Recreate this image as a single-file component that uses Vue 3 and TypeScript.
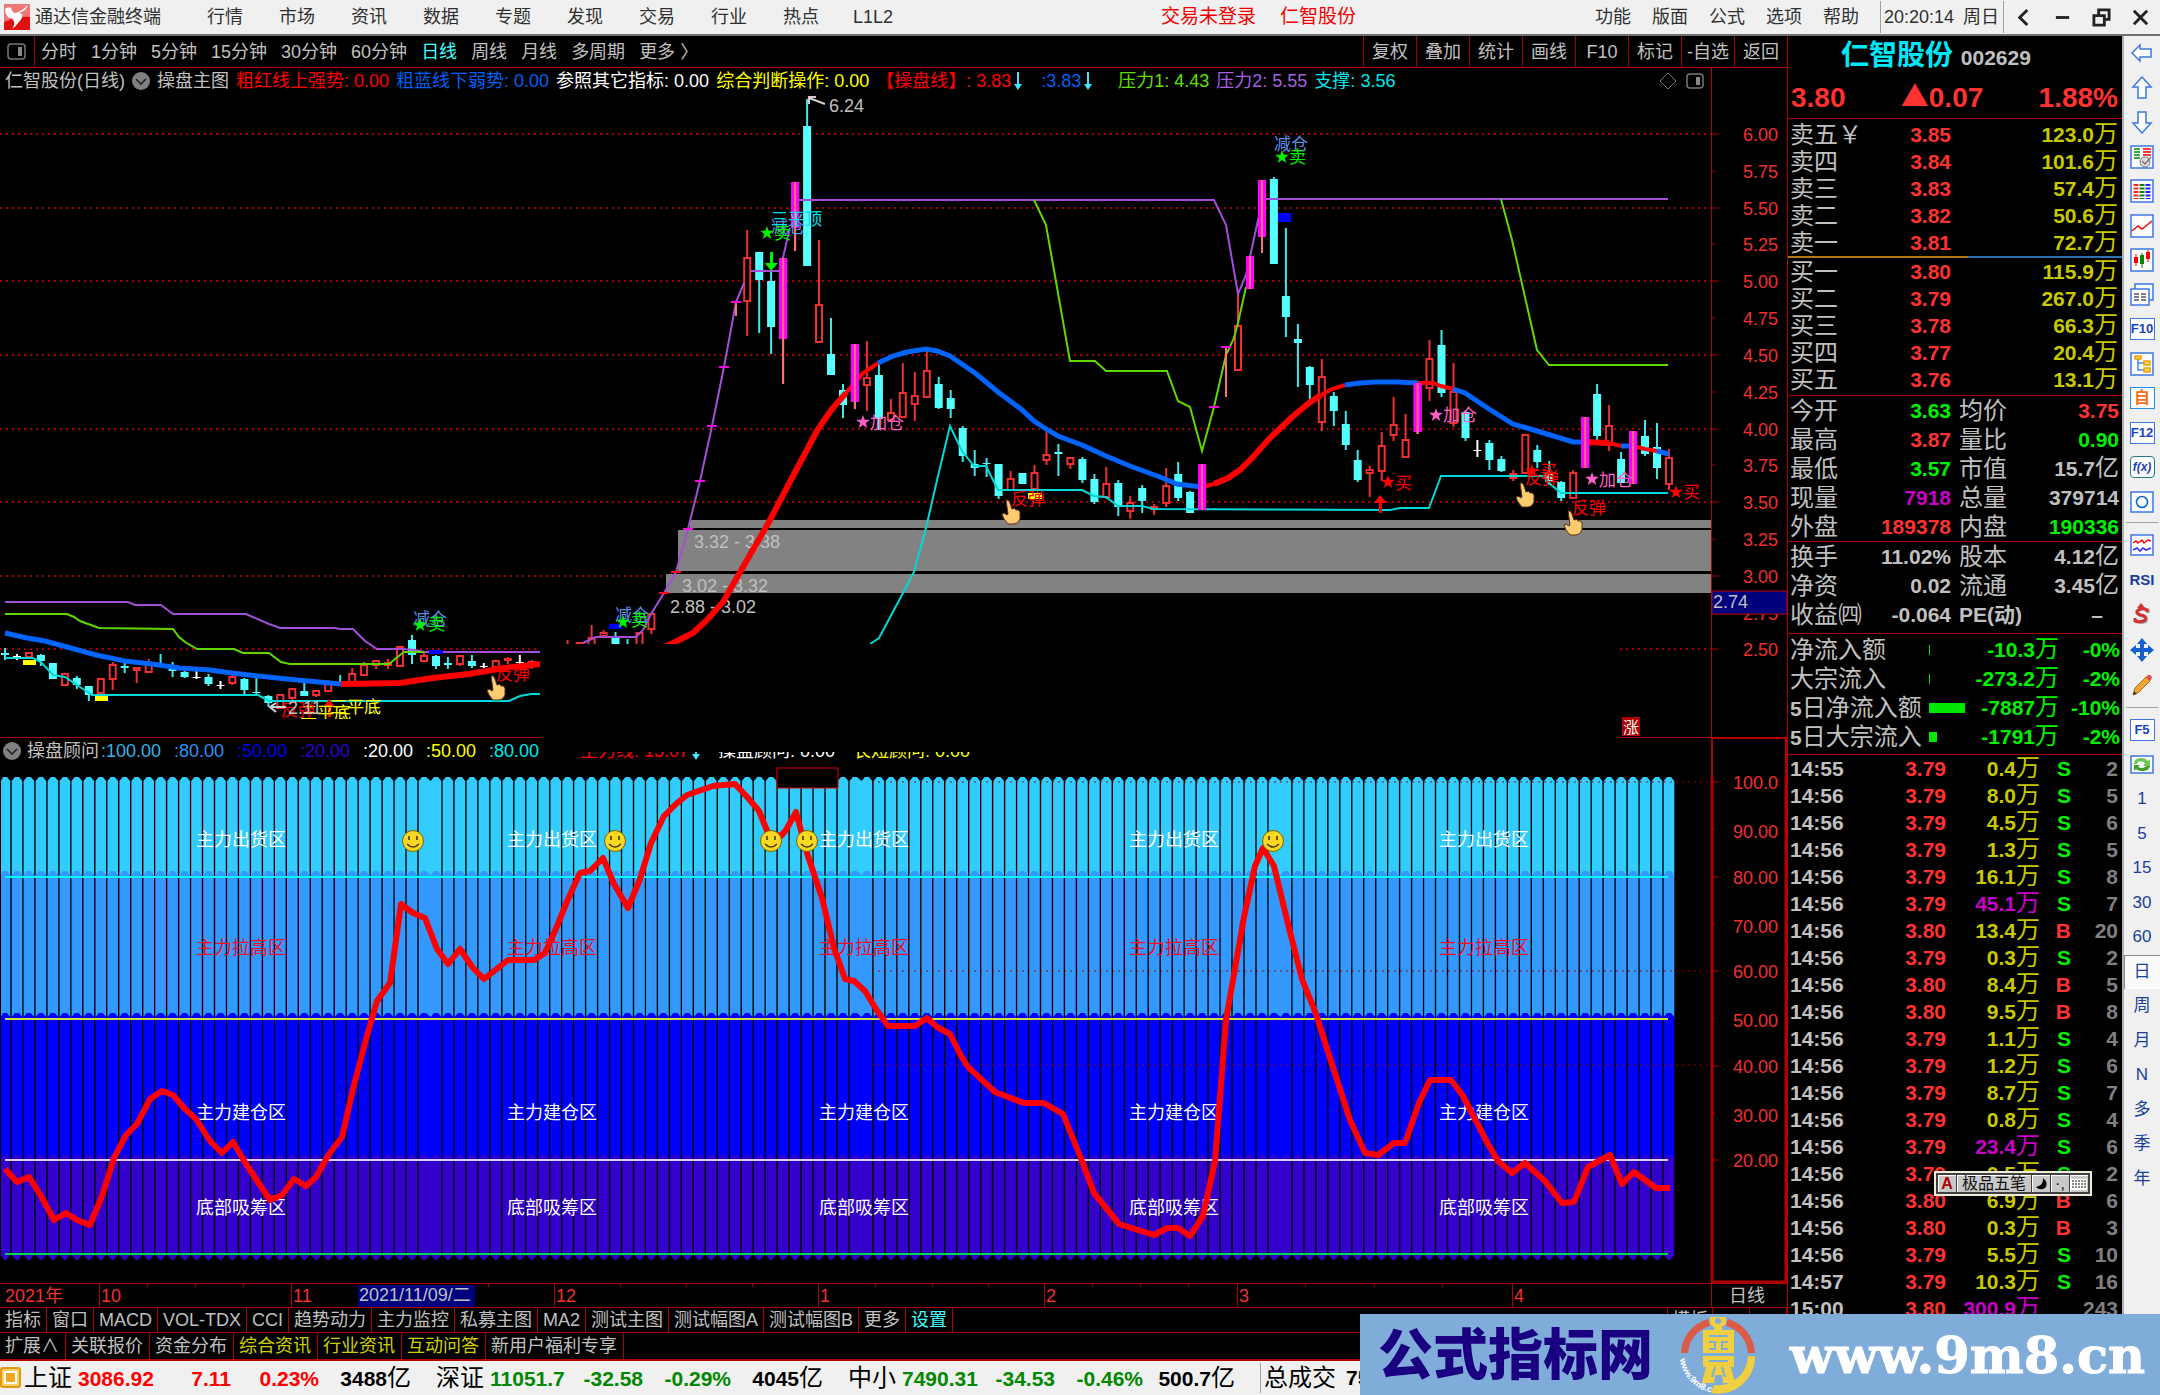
<script setup lang="ts">
type Candle = { x: number; kind: string; high: number; top: number; bottom: number; low: number }

const STEP = 11.971
const xAt = (i: number): number => Math.round((5 + i * STEP) * 10) / 10

const menuLeft = ['行情', '市场', '资讯', '数据', '专题', '发现', '交易', '行业', '热点', 'L1L2']
const menuRight = ['功能', '版面', '公式', '选项', '帮助']
const periods = ['分时', '1分钟', '5分钟', '15分钟', '30分钟', '60分钟', '日线', '周线', '月线', '多周期', '更多 〉']
const tools = ['复权', '叠加', '统计', '画线', 'F10', '标记', '-自选', '返回']

const legendMain = [
  { t: '操盘主图', c: 'silver' },
  { t: '粗红线上强势: 0.00', c: 'red' },
  { t: '粗蓝线下弱势: 0.00', c: 'blue' },
  { t: '参照其它指标: 0.00', c: 'white' },
  { t: '综合判断操作: 0.00', c: 'yellow' },
]
const legendSub = [
  { t: ':100.00', c: 'b1 wide' },
  { t: ':80.00', c: 'b2' },
  { t: ':50.00', c: 'b3' },
  { t: ':20.00', c: 'b4' },
  { t: ':20.00', c: 'white' },
  { t: ':50.00', c: 'yellow' },
  { t: ':80.00', c: 'cyan' },
]

/* index kind high bodyTop bodyBottom low */
const raw = `0 c 648 653 655 660|1 w 654 656 657 660|2 r 652 653 657 658|3 c 654 655 661 666|4 c 663 663 679 679|5 r 674 674 685 685
6 c 676 678 685 689|7 c 686 686 695 701|8 r 679 679 693 693|9 r 662 665 679 690|10 c 660 666 668 673|11 r 667 668 670 683
12 r 659 663 672 673|13 c 654 664 666 667|14 c 662 665 671 677|15 c 671 672 677 678|16 w 667 677 678 679|17 c 674 677 684 686
18 w 681 685 686 689|19 r 673 677 683 685|20 c 678 679 690 695|21 c 677 692 693 695|22 c 695 696 703 707|23 r 695 695 708 708
24 r 689 689 698 703|25 c 681 691 696 696|26 r 690 691 695 697|27 r 680 683 691 691|28 c 675 682 683 684|29 r 668 674 684 684
30 r 662 665 675 675|31 r 660 661 665 669|32 r 659 663 665 669|33 r 647 647 666 666|34 c 635 640 655 664|35 r 653 656 661 662
36 c 655 656 666 669|37 c 657 663 665 669|38 r 655 656 664 666|39 c 655 661 666 668|40 w 663 666 667 668|41 r 661 661 667 667
42 r 657 659 660 664|43 w 655 662 663 668|44 r 660 662 665 669|47 r 640 648 650 652|48 r 643 643 650 652|49 r 625 638 650 652
50 r 630 633 636 638|51 c 632 637 650 652|52 c 639 648 650 652|53 r 633 633 650 652|54 r 613 614 629 634
62 r 230 258 301 336|63 c 252 252 280 333|64 c 270 281 327 354|65 m 258 258 339 384|66 m 182 182 228 251|67 c 99 126 266 266
68 r 240 305 342 342|69 c 318 354 375 375|70 c 384 390 405 418|71 m 344 344 402 409|72 r 341 378 385 411|73 c 362 375 419 430
74 r 399 413 420 422|75 r 363 393 417 417|76 r 372 396 404 421|77 r 350 371 397 397|78 c 377 384 408 409|79 c 390 398 409 418
80 c 426 428 456 462|81 c 450 464 468 476|82 c 458 463 464 477|83 c 464 464 496 499|84 r 471 479 490 490|85 c 473 473 484 484
86 r 465 473 489 489|87 r 427 455 460 465|88 c 444 452 454 476|89 r 458 458 464 469|90 c 457 459 480 483|91 c 474 479 502 504
92 r 467 484 497 499|93 c 480 483 507 516|94 r 496 503 511 519|95 c 485 488 501 513|96 r 504 507 509 515|97 r 468 486 503 507
98 c 462 474 498 501|99 c 491 492 513 513|100 m 464 464 510 510|103 r 292 326 370 370|104 m 256 256 289 289|105 m 180 180 237 253
106 c 177 179 264 264|107 c 228 296 317 337|108 c 324 339 343 387|109 c 366 367 385 405|110 r 359 377 422 431|111 c 392 396 411 426
112 c 411 424 445 450|113 c 450 460 480 482|114 r 466 470 473 497|115 r 432 446 471 481|116 r 397 425 435 441|117 r 414 440 457 457
118 m 383 383 432 434|119 r 340 359 388 401|120 c 330 345 393 397|121 r 363 392 423 427|122 c 411 412 438 441|123 w 440 450 451 457
124 c 440 443 460 470|125 c 456 459 471 472|126 r 470 474 478 481|127 r 435 435 473 473|128 c 445 450 462 468|129 c 461 473 482 485
130 c 481 482 498 501|131 r 470 473 498 498|132 m 417 417 468 468|133 c 384 394 436 443|134 r 405 426 445 451|135 c 452 459 483 483
136 m 431 431 484 484|137 c 420 436 454 456|138 c 423 447 468 479|139 r 449 458 484 490`

const candles: Candle[] = raw.split(/[|\n]/).map((s) => {
  const [i, kind, h, t, b, l] = s.trim().split(' ')
  return { x: xAt(+i), kind, high: +h, top: +t, bottom: +b, low: +l }
})

const limitTicks = [
  { x: 664, y: 593, c: 'tick-red' }, { x: 676, y: 572, c: 'tick-red' }, { x: 688, y: 529, c: 'tick-mag' },
  { x: 700, y: 481, c: 'tick-mag' }, { x: 712, y: 426, c: 'tick-mag' }, { x: 724, y: 367, c: 'tick-mag' },
  { x: 736, y: 302, c: 'tick-mag' }, { x: 1214, y: 407, c: 'tick-mag' }, { x: 1226, y: 347, c: 'tick-mag' },
]

const priceAxis = Array.from({ length: 15 }, (_, i) => ({
  v: (6 - i * 0.25).toFixed(2),
  y: Math.round(134 + i * 36.82),
  major: i % 2 === 0,
}))

const thick = [
  { c: 'ma-blue', p: '5,633 27,638 45,641 67,647 96,655 125,661 152,664 179,668 210,670 232,673 277,678 308,681 341,684' },
  { c: 'ma-red', p: '341,684 400,683 433,678 469,674 504,668 540,664' },
  { c: 'ma-red', p: '660,649 671,644 693,633 707,620 723,602 743,567 770,520 793,476 818,429 832,409 846,393' },
  { c: 'ma-red thin', p: '846,393 862,374 878,363' },
  { c: 'ma-blue', p: '878,363 893,356 907,352 926,349 937,351 950,356 975,373 998,392 1021,409 1034,421 1046,429 1058,436 1082,445 1106,456 1130,466 1160,477 1177,484 1202,487' },
  { c: 'ma-red thin', p: '1202,487 1214,484' },
  { c: 'ma-red', p: '1214,484 1228,478 1240,470 1252,458 1271,437 1291,418 1309,403 1321,395' },
  { c: 'ma-red thin', p: '1321,395 1332,389 1345,385' },
  { c: 'ma-blue', p: '1345,385 1360,383 1375,382 1397,382 1418,383' },
  { c: 'ma-red thin', p: '1418,383 1433,383 1441,386 1453,389' },
  { c: 'ma-blue', p: '1453,389 1465,393 1489,409 1513,424 1537,431 1573,442 1585,442' },
  { c: 'ma-red', p: '1585,442 1609,443' },
  { c: 'ma-red thin', p: '1609,443 1621,446' },
  { c: 'ma-blue', p: '1621,446 1633,446' },
  { c: 'ma-red thin', p: '1633,446 1645,449 1657,451' },
  { c: 'ma-blue', p: '1657,451 1669,454' },
]

const thin = [
  { c: 'ln-purple', p: '5,602 128,602 135,605 161,605 173,614 246,614 269,624 280,628 335,628 340,629 353,629 365,641 377,649 402,649 415,650 424,652 540,652' },
  { c: 'ln-purple', p: '583,643 596,637 636,637 643,630 651,614 664,593 676,572 688,529 700,481 712,426 724,367 736,302 744,283' },
  { c: 'ln-purple', p: '751,271 780,271 787,240 790,228' },
  { c: 'ln-purple', p: '797,200 1214,200 1226,225 1238,294 1246,275 1258,220 1263,199 1668,199' },
  { c: 'ln-green', p: '5,614 67,614 74,617 80,621 99,628 173,629 179,637 185,642 197,649 234,649 243,653 269,653 281,662 290,664 389,664 400,655 404,652 424,652' },
  { c: 'ln-green', p: '1034,200 1046,225 1070,361 1095,361 1106,371 1167,371 1178,401 1190,407 1202,451 1214,407 1226,355 1234,338 1238,323 1246,287' },
  { c: 'ln-green', p: '1501,199 1512,240 1537,350 1549,365 1668,365' },
  { c: 'ln-cyan', p: '5,658 33,658 41,662 53,675 65,677 77,685 92,695 258,695 269,701 509,701 520,696 531,694 540,694' },
  { c: 'ln-cyan', p: '870,644 879,638 903,593 914,572 926,528 938,476 950,426 962,451 974,466 986,466 998,490 1082,490 1094,496 1106,497 1118,506 1142,506 1154,509 1390,510 1400,508 1429,508 1441,476 1544,476 1549,483 1561,493 1668,493' },
]

const starPath = 'M0-7L1.7-2.2L7-2.2L2.8.9L4.3 6L0 3L-4.3 6L-2.8.9L-7-2.2L-1.7-2.2Z'
const stars = [
  { x: 420, y: 625, c: 'f-green' }, { x: 623, y: 622, c: 'f-green' }, { x: 767, y: 233, c: 'f-green' }, { x: 1282, y: 157, c: 'f-green' },
  { x: 863, y: 422, c: 'f-pink' }, { x: 1436, y: 415, c: 'f-pink' }, { x: 1592, y: 479, c: 'f-pink' },
  { x: 1388, y: 482, c: 'f-red' }, { x: 1532, y: 471, c: 'f-red' }, { x: 1676, y: 492, c: 'f-red' },
]
const notes = [
  { t: '减仓', x: 413, y: 625, c: 'f-steel' }, { t: '卖', x: 428, y: 630, c: 'f-green' },
  { t: '减仓', x: 615, y: 621, c: 'f-steel' }, { t: '卖', x: 631, y: 626, c: 'f-green' },
  { t: '减仓', x: 771, y: 233, c: 'f-steel' }, { t: '卖', x: 774, y: 239, c: 'f-green' },
  { t: '三平顶', x: 771, y: 225, c: 'f-cyan' },
  { t: '减仓', x: 1274, y: 150, c: 'f-steel' }, { t: '卖', x: 1289, y: 163, c: 'f-green' },
  { t: '加仓', x: 870, y: 429, c: 'f-pink' }, { t: '加仓', x: 1443, y: 421, c: 'f-pink' }, { t: '加仓', x: 1599, y: 486, c: 'f-pink' },
  { t: '买', x: 1395, y: 489, c: 'f-red' }, { t: '买', x: 1540, y: 477, c: 'f-red' }, { t: '买', x: 1683, y: 498, c: 'f-red' },
  { t: '反弹', x: 1525, y: 484, c: 'f-red' }, { t: '反弹', x: 1572, y: 514, c: 'f-red' },
  { t: '反弹', x: 1011, y: 505, c: 'f-red' }, { t: '反弹', x: 496, y: 680, c: 'f-red' },
]
const hands = [{ x: 1525, y: 495 }, { x: 1573, y: 523 }, { x: 1011, y: 512 }, { x: 496, y: 688 }]
const blocks = [
  { x: 429, y: 650, w: 14, h: 4, c: 'f-navy' }, { x: 609, y: 624, w: 13, h: 5, c: 'f-navy' }, { x: 1278, y: 213, w: 13, h: 9, c: 'f-navy' },
  { x: 23, y: 660, w: 13, h: 5, c: 'f-yellow' }, { x: 95, y: 696, w: 13, h: 5, c: 'f-yellow' }, { x: 1028, y: 493, w: 14, h: 6, c: 'f-yellow' },
]

/* Sub chart: four stacked bands, each made of 140 scalloped columns */
function band(top: number, bottom: number, pointed = false): string {
  let d = ''
  for (let i = 0; i < 140; i++) {
    const x = xAt(i)
    const l = Math.max(1, x - 5.3)
    const r = x + (i === 35 || i === 71 || i === 106 ? 6.7 : 5.3)
    d += `M${l} ${bottom}V${top + 4}L${x - 2} ${top}H${x + 2}L${r} ${top + 4}V${bottom}`
    d += pointed ? `L${x + 1} ${bottom + 5}H${x - 1}Z` : 'Z'
  }
  return d
}
const bands = [
  { c: 'band1', d: band(776, 876) },
  { c: 'band2', d: band(870, 1018) },
  { c: 'band3', d: band(1012, 1159) },
  { c: 'band4', d: band(1154, 1254, true) },
]
const force = '5,1168 17,1181 29,1176 41,1195 54,1219 66,1212 77,1219 90,1224 102,1195 114,1157 126,1134 137,1123 150,1098 162,1090 173,1094 185,1108 196,1118 210,1140 222,1152 233,1141 246,1163 270,1199 282,1194 294,1178 306,1185 316,1176 329,1153 342,1136 353,1088 366,1038 377,1000 390,982 401,903 413,912 425,917 437,948 448,963 460,948 473,967 484,978 508,959 534,959 545,952 555,930 568,898 580,872 590,870 603,857 614,883 628,907 640,878 651,842 664,815 677,802 687,794 713,785 735,783 748,797 759,810 768,832 781,835 786,829 796,811 807,852 822,897 834,947 845,978 854,980 865,990 876,1008 888,1025 915,1025 927,1017 937,1026 950,1033 960,1053 968,1066 995,1091 1024,1102 1044,1102 1063,1113 1082,1160 1094,1192 1119,1223 1154,1234 1167,1227 1178,1227 1190,1235 1203,1215 1215,1160 1226,1019 1244,916 1255,865 1263,847 1274,865 1288,923 1302,978 1316,1013 1329,1054 1350,1119 1365,1152 1378,1154 1394,1142 1405,1142 1419,1102 1430,1079 1451,1079 1463,1095 1488,1143 1498,1160 1512,1172 1525,1162 1545,1180 1562,1202 1574,1201 1588,1166 1610,1154 1622,1183 1634,1171 1656,1187 1670,1187'
const zoneX = [196, 507, 819, 1129, 1439]
const zones = [
  { t: '主力出货区', y: 845, c: 'f-white' }, { t: '主力拉高区', y: 953, c: 'f-zone' },
  { t: '主力建仓区', y: 1118, c: 'f-white' }, { t: '底部吸筹区', y: 1213, c: 'f-white' },
]
const smiles = [413, 615, 771, 807, 1273]
const subAxis = ['100.0', '90.00', '80.00', '70.00', '60.00', '50.00', '40.00', '30.00', '20.00'].map((v, i) => ({
  v, tick: Math.round(781 + i * 47.25), y: Math.round(781 + i * 47.25) + (i % 2 ? 2 : 0), major: i % 2 === 0,
}))
const months = [
  { t: '10', x: 99 }, { t: '11', x: 291 }, { t: '12', x: 554 }, { t: '1', x: 818 },
  { t: '2', x: 1044 }, { t: '3', x: 1237 }, { t: '4', x: 1512 },
]
const minorTicks = [147, 195, 243, 488, 620, 686, 752, 875, 932, 988, 1092, 1140, 1188, 1305, 1374, 1442]

const tabs1 = ['指标', '窗口', 'MACD', 'VOL-TDX', 'CCI', '趋势动力', '主力监控', '私募主图', 'MA2', '测试主图', '测试幅图A', '测试幅图B', '更多', '设置']
const tabs2 = ['扩展∧', '关联报价', '资金分布', '综合资讯', '行业资讯', '互动问答', '新用户福利专享']

const asks = [['卖五￥', '3.85', '123.0'], ['卖四', '3.84', '101.6'], ['卖三', '3.83', '57.4'], ['卖二', '3.82', '50.6'], ['卖一', '3.81', '72.7']]
const bids = [['买一', '3.80', '115.9'], ['买二', '3.79', '267.0'], ['买三', '3.78', '66.3'], ['买四', '3.77', '20.4'], ['买五', '3.76', '13.1']]

const stats1 = [
  { a: '今开', av: '3.63', ac: 'up-g', b: '均价', bv: '3.75', bc: 'up-r', u: '' },
  { a: '最高', av: '3.87', ac: 'up-r', b: '量比', bv: '0.90', bc: 'up-g', u: '' },
  { a: '最低', av: '3.57', ac: 'up-g', b: '市值', bv: '15.7', bc: '', u: '亿' },
  { a: '现量', av: '7918', ac: 'up-m', b: '总量', bv: '379714', bc: '', u: '' },
  { a: '外盘', av: '189378', ac: 'up-r', b: '内盘', bv: '190336', bc: 'up-g', u: '' },
]
const stats2 = [
  { a: '换手', av: '11.02%', b: '股本', bv: '4.12', u: '亿' },
  { a: '净资', av: '0.02', b: '流通', bv: '3.45', u: '亿' },
  { a: '收益㈣', av: '-0.064', b: 'PE(动)', bv: '–', u: '' },
]
const flows = [
  { d: '', n: '净流入额', w: 1, v: '-10.3', p: '-0%' },
  { d: '', n: '大宗流入', w: 1, v: '-273.2', p: '-2%' },
  { d: '5', n: '日净流入额', w: 36, v: '-7887', p: '-10%' },
  { d: '5', n: '日大宗流入', w: 8, v: '-1791', p: '-2%' },
]
const trades = [
  ['14:55', '3.79', '0.4', 'S', '2'], ['14:56', '3.79', '8.0', 'S', '5'], ['14:56', '3.79', '4.5', 'S', '6'],
  ['14:56', '3.79', '1.3', 'S', '5'], ['14:56', '3.79', '16.1', 'S', '8'], ['14:56', '3.79', '45.1', 'S', '7'],
  ['14:56', '3.80', '13.4', 'B', '20'], ['14:56', '3.79', '0.3', 'S', '2'], ['14:56', '3.80', '8.4', 'B', '5'],
  ['14:56', '3.80', '9.5', 'B', '8'], ['14:56', '3.79', '1.1', 'S', '4'], ['14:56', '3.79', '1.2', 'S', '6'],
  ['14:56', '3.79', '8.7', 'S', '7'], ['14:56', '3.79', '0.8', 'S', '4'], ['14:56', '3.79', '23.4', 'S', '6'],
  ['14:56', '3.79', '0.5', 'S', '2'], ['14:56', '3.80', '6.9', 'B', '6'], ['14:56', '3.80', '0.3', 'B', '3'],
  ['14:56', '3.79', '5.5', 'S', '10'], ['14:57', '3.79', '10.3', 'S', '16'], ['15:00', '3.80', '300.9', '', '243'],
]
const isBig = (v: string): boolean => Number(v) > 20

const railPeriods = ['1', '5', '15', '30', '60', '日', '周', '月', 'N', '多', '季', '年']

const indices = [
  { n: '上证', v: '3086.92', d: '7.11', p: '0.23%', a: '3488', c: 's-red' },
  { n: '深证', v: '11051.7', d: '-32.58', p: '-0.29%', a: '4045', c: 's-green' },
  { n: '中小', v: '7490.31', d: '-34.53', p: '-0.46%', a: '500.7', c: 's-green' },
]
</script>

<template>
  <div class="app">
    <header class="menubar">
      <svg class="logo" viewBox="0 0 26 26" aria-hidden="true">
        <rect width="26" height="26" fill="#e01010" />
        <path d="M0 0H26V13Q14 12 0 18Z" fill="#ee7878" />
        <path d="M24 1Q23 6 15 9L18 10Q19 14 15 18Q12 22 8 25Q12 19 9 16L8 14Q2 15 1 5Q4 2 7 4Q8 9 12 9Q18 7 24 1Z" fill="#fff" />
      </svg>
      <span class="brand">通达信金融终端</span>
      <nav class="menu-left">
        <button v-for="m in menuLeft" :key="m" type="button">{{ m }}</button>
      </nav>
      <div class="notice"><a href="#">交易未登录</a><a href="#">仁智股份</a></div>
      <nav class="menu-right">
        <button v-for="m in menuRight" :key="m" type="button">{{ m }}</button>
      </nav>
      <div class="clock"><span>20:20:14</span><span>周日</span></div>
      <div class="winbtns">
        <button type="button" aria-label="后退"><svg viewBox="0 0 20 20"><path d="M14 2L6 10L14 18" /></svg></button>
        <button type="button" aria-label="最小化"><svg viewBox="0 0 20 20"><path d="M3 10H17" /></svg></button>
        <button type="button" aria-label="还原"><svg viewBox="0 0 20 20"><path d="M2 8H13V18H2ZM7 8V2H18V12H13" /></svg></button>
        <button type="button" aria-label="关闭"><svg viewBox="0 0 20 20"><path d="M3 3L17 17M17 3L3 17" /></svg></button>
      </div>
    </header>

    <main class="body">
      <section class="charts">
        <div class="toolbar">
          <button class="pane-btn" type="button" aria-label="面板">
            <svg viewBox="0 0 20 20"><rect x="1" y="2" width="17" height="15" rx="3" fill="none" stroke="#777" stroke-width="1.5" /><rect x="11" y="5" width="4" height="9" fill="#888" /></svg>
          </button>
          <nav class="periods">
            <button v-for="p in periods" :key="p" type="button" :class="{ active: p === '日线' }">{{ p }}</button>
          </nav>
          <div class="tools"><button v-for="t in tools" :key="t" type="button">{{ t }}</button></div>
        </div>

        <div class="legend main-legend">
          <div class="legend-row">
            <span class="silver">仁智股份(日线)</span>
            <svg class="drop" viewBox="0 0 18 18"><circle cx="9" cy="9" r="9" fill="#808080" /><path d="M4 7L9 12L14 7" fill="none" stroke="#222" stroke-width="1.6" /></svg>
            <span v-for="l in legendMain" :key="l.t" :class="l.c">{{ l.t }}</span>
            <span class="red">【操盘线】: 3.83<svg class="down" viewBox="0 0 8 20"><path d="M3 1H5V13H8L4 19L0 13H3Z" /></svg></span>
            <span class="blue second">:3.83<svg class="down" viewBox="0 0 8 20"><path d="M3 1H5V13H8L4 19L0 13H3Z" /></svg></span>
            <span class="lime">压力1: 4.43</span>
            <span class="violet">压力2: 5.55</span>
            <span class="cyan">支撑: 3.56</span>
            <svg class="corner" viewBox="0 0 46 20"><path d="M9 2L17 10L9 18L1 10Z" fill="none" stroke="#777" /><rect x="28" y="3" width="16" height="14" rx="3" fill="none" stroke="#777" stroke-width="1.5" /><rect x="37" y="6" width="4" height="8" fill="#888" /></svg>
          </div>
          <div class="axis-cap"></div>
        </div>

        <svg class="chart" viewBox="0 94 1787 644" role="img" aria-label="日线主图">
          <g class="dotted">
            <path v-for="a in priceAxis.filter((p) => p.major)" :key="a.v" :d="`M0 ${a.y}H1711`" />
          </g>
          <g class="zone-grey">
            <path d="M690 520H1711V528H690ZM678 530H1711V571H678ZM666 574H1711V593H666Z" />
          </g>
          <text class="f-silver" x="694" y="548">3.32 - 3.38</text>
          <text class="f-silver" x="682" y="592">3.02 - 3.32</text>
          <text class="f-silver" x="670" y="613">2.88 - 3.02</text>
          <g v-for="c in candles" :key="c.x" :class="'k-' + c.kind">
            <template v-if="c.kind === 'r'">
              <path :d="`M${c.x} ${c.high}V${c.top}M${c.x} ${c.bottom}V${c.low}`" />
              <rect :x="c.x - 3" :y="c.top" width="6" :height="Math.max(1, c.bottom - c.top)" />
            </template>
            <template v-else-if="c.kind === 'm'">
              <rect :x="c.x - 4" :y="c.top" width="8" :height="c.bottom - c.top" />
              <path :d="`M${c.x} ${c.top}V${c.low}`" />
            </template>
            <template v-else>
              <path :d="`M${c.x} ${c.high}V${c.low}`" />
              <rect :x="c.x - 4" :y="c.top" width="8" :height="Math.max(1, c.bottom - c.top)" />
            </template>
          </g>
          <polyline v-for="(l, i) in thin" :key="'n' + i" :class="l.c" :points="l.p" />
          <polyline v-for="(l, i) in thick" :key="'k' + i" :class="l.c" :points="l.p" />
          <g v-for="c in candles.filter((k) => k.kind === 'm')" :key="'m' + c.x" class="k-m">
            <rect :x="c.x - 4" :y="c.top" width="8" :height="c.bottom - c.top" />
            <path :d="`M${c.x} ${c.top}V${c.low}`" />
          </g>
          <path class="pink-wick" d="M736 302V316M1226 347V397" />
          <path v-for="t in limitTicks" :key="t.x" :class="t.c" :d="`M${t.x - 5} ${t.y}H${t.x + 5}`" />
          <rect v-for="b in blocks" :key="b.x" :class="b.c" :x="b.x" :y="b.y" :width="b.w" :height="b.h" />
          <g v-for="n in notes" :key="n.t + n.x"><text class="note" :class="n.c" :x="n.x" :y="n.y">{{ n.t }}</text></g>
          <path v-for="s in stars" :key="s.x" :class="s.c" :d="starPath" :transform="`translate(${s.x} ${s.y})`" />
          <path class="f-green" d="M770 252H773V263H778L771 271L765 263H770Z" />
          <path class="f-red" d="M1379 513V503H1374L1380 495L1387 503H1382V513ZM328 717V707H323L329 699L335 707H331V717Z" />
          <g v-for="h in hands" :key="h.x" :transform="`translate(${h.x} ${h.y})`">
            <path class="hand" d="M-5-12Q-2-13-1-9L1-3Q4-5 5-2Q8-3 9 0L9 7Q7 12 3 12H-3Q-8 7-9 2Q-7 0-4 3L-3 2Z" />
          </g>
          <text class="note f-yellow" x="330" y="713">三平底</text>
          <text class="note f-yellow" x="300" y="719">三平底</text>
          <text class="note f-red" x="281" y="716">反弹</text>
          <text class="f-silver" x="288" y="714">2.11</text>
          <path class="arrow" d="M286 707H270M276 703L270 707L276 712" />
          <text class="f-silver" x="829" y="112">6.24</text>
          <path class="arrow" d="M825 104L809 98M816 97H809V104" />
          <rect x="0" y="719" width="540" height="18" fill="#000" />
          <rect x="540" y="644" width="1080" height="94" fill="#000" />
          <path class="redline" d="M0 737.5H540M1620 737.5H1711M1711.5 94V738M1711 737.5H1787" />
          <rect x="1622" y="717" width="18" height="19" fill="#b00000" />
          <text class="badge" x="1623" y="733">涨</text>
          <path v-for="a in priceAxis" :key="'t' + a.v" class="redline" :d="`M1711 ${a.y}H${a.major ? 1719 : 1715}`" />
          <text v-for="a in priceAxis" :key="'p' + a.v" class="axis" x="1778" :y="a.y + 7">{{ a.v }}</text>
          <rect class="cursor" x="1712" y="591" width="75" height="23" />
          <text class="f-silver" x="1713" y="608">2.74</text>
        </svg>

        <div class="legend sub-legend">
          <div class="legend-row">
            <svg class="drop" viewBox="0 0 18 18"><circle cx="9" cy="9" r="9" fill="#808080" /><path d="M4 7L9 12L14 7" fill="none" stroke="#222" stroke-width="1.6" /></svg>
            <span class="silver title">操盘顾问</span>
            <span v-for="(l, i) in legendSub" :key="i" class="num" :class="l.c">{{ l.t }}</span>
            <span class="cutoff">
              <span class="red">主力线: 15.07<svg class="down" viewBox="0 0 8 20"><path d="M3 1H5V13H8L4 19L0 13H3Z" /></svg></span>
              <span class="white">操盘顾问: 0.00</span>
              <span class="yellow">长短顾问: 0.00</span>
            </span>
          </div>
          <div class="axis-cap box"></div>
        </div>

        <svg class="chart sub" viewBox="0 775 1787 532" role="img" aria-label="操盘顾问副图">
          <path v-for="b in bands" :key="b.c" :class="b.c" :d="b.d" />
          <g class="dotted faint"><path d="M872 781H1711M872 970H1711M872 1064H1711" /></g>
          <path d="M5 876H1668" stroke="#00ffff" stroke-width="2" />
          <path d="M5 1018H1668" stroke="#d8d840" stroke-width="2" />
          <path d="M5 1159H1668" stroke="#d8d0ff" stroke-width="2" />
          <path d="M5 1253H1668" stroke="#00d84a" stroke-width="2" />
          <g v-for="z in zones" :key="z.t">
            <text v-for="x in zoneX" :key="x" :class="z.c" :x="x" :y="z.y">{{ z.t }}</text>
          </g>
          <polyline class="force" :points="force" />
          <rect x="777" y="767" width="61" height="20" fill="#000" stroke="#e00000" />
          <g v-for="s in smiles" :key="s" :transform="`translate(${s} 840)`">
            <circle r="10.5" fill="#f8d820" stroke="#7a6400" />
            <path d="M-4-5V-1M4-5V-1M-6 3Q0 9 6 3" fill="none" stroke="#4a3a00" stroke-width="1.6" />
          </g>
          <path class="redline bold" d="M1712 775V1281H1786V775" />
          <path class="redline" d="M0 1282.5H1787M0 1306.5H1787M1711.5 1282V1307" />
          <path v-for="a in subAxis" :key="'s' + a.v" class="redline" :d="`M1711 ${a.tick}H${a.major ? 1719 : 1715}`" />
          <text v-for="a in subAxis" :key="a.v" class="axis" x="1778" :y="a.y + 7">{{ a.v }}</text>
          <path v-for="m in minorTicks" :key="m" class="redline" :d="`M${m}.5 1282V1286`" />
          <g v-for="m in months" :key="m.x">
            <path class="redline" :d="`M${m.x}.5 1282V1307`" />
            <text class="month" :x="m.x + 2" y="1301">{{ m.t }}</text>
          </g>
          <text class="month" x="5" y="1301">2021年</text>
          <rect x="358" y="1284" width="117" height="22" fill="#00007f" />
          <text class="f-silver" x="359" y="1300">2021/11/09/二</text>
          <text class="f-silver" x="1729" y="1301">日线</text>
        </svg>

        <nav class="tabs first">
          <button v-for="t in tabs1" :key="t" type="button" :class="{ active: t === '设置' }">{{ t }}</button>
          <span class="spacer"></span>
          <button type="button" class="lead">模板</button><button type="button" class="sq">+</button><button type="button" class="sq">-</button>
        </nav>
        <nav class="tabs second">
          <button v-for="t in tabs2" :key="t" type="button" :class="{ gold: ['综合资讯', '行业资讯', '互动问答'].includes(t) }">{{ t }}</button>
        </nav>
      </section>

      <aside class="quote">
        <div class="head">
          <h1>仁智股份 <small>002629</small></h1>
          <div class="price"><span>3.80</span><span><i class="tri">▲</i>0.07</span><span>1.88%</span></div>
        </div>
        <table class="book asks">
          <tbody><tr v-for="r in asks" :key="r[0]"><th scope="row">{{ r[0] }}</th><td class="up-r">{{ r[1] }}</td><td class="vol">{{ r[2] }}<em>万</em></td></tr></tbody>
        </table>
        <div class="ratio"><span></span></div>
        <table class="book bids">
          <tbody><tr v-for="r in bids" :key="r[0]"><th scope="row">{{ r[0] }}</th><td class="up-r">{{ r[1] }}</td><td class="vol">{{ r[2] }}<em>万</em></td></tr></tbody>
        </table>
        <dl class="stats">
          <div v-for="s in stats1" :key="s.a">
            <dt>{{ s.a }}</dt><dd :class="s.ac">{{ s.av }}</dd><dt>{{ s.b }}</dt><dd :class="s.bc">{{ s.bv }}<em>{{ s.u }}</em></dd>
          </div>
        </dl>
        <dl class="stats more">
          <div v-for="s in stats2" :key="s.a">
            <dt>{{ s.a }}</dt><dd>{{ s.av }}</dd><dt :class="{ latin: s.b.startsWith('PE') }">{{ s.b }}</dt><dd :class="{ dash: s.bv === '–' }">{{ s.bv }}<em>{{ s.u }}</em></dd>
          </div>
        </dl>
        <div class="flows">
          <div v-for="f in flows" :key="f.n"><span class="name"><strong>{{ f.d }}</strong>{{ f.n }}</span><span class="bar"><i :style="{ width: f.w + 'px' }"></i></span><b>{{ f.v }}<em>万</em></b><b>{{ f.p }}</b></div>
        </div>
        <div class="trades">
          <table>
            <tbody>
              <tr v-for="(t, i) in trades" :key="i">
                <td class="time">{{ t[0] }}</td><td class="up-r">{{ t[1] }}</td>
                <td :class="isBig(t[2]) ? 'up-m' : 'vol'">{{ t[2] }}<em>万</em></td>
                <td class="side" :class="t[3] === 'B' ? 'up-r' : 'up-g'">{{ t[3] }}</td><td class="cnt">{{ t[4] }}</td>
              </tr>
            </tbody>
          </table>
          <div class="ime">
            <button type="button" class="a">A</button><button type="button" class="name">极品五笔</button>
            <button type="button" aria-label="半角"><svg viewBox="0 0 16 16"><path d="M10 2Q11 9 3 11Q7 15 12 12Q16 7 10 2Z" /></svg></button>
            <button type="button">·,</button>
            <button type="button" aria-label="键盘"><svg viewBox="0 0 16 16"><rect x="0" y="3" width="16" height="11" fill="#fff" /><path d="M1 5H15M1 8H15M1 11H15" stroke="#888" stroke-width="2" stroke-dasharray="2 1" /></svg></button>
          </div>
        </div>
      </aside>

      <nav class="rail">
        <div class="group g14">
          <button type="button" aria-label="后退"><svg viewBox="0 0 24 24"><path class="hollow" d="M2 12L10 4V8H21V16H10V20Z" /></svg></button>
          <button type="button" aria-label="向上"><svg viewBox="0 0 24 24"><path class="hollow" d="M12 1L21 11H16V22H8V11H3Z" /></svg></button>
          <button type="button" aria-label="向下"><svg viewBox="0 0 24 24"><path class="hollow" d="M12 23L21 13H16V2H8V13H3Z" /></svg></button>
          <button type="button" aria-label="报价"><svg viewBox="0 0 24 24"><rect class="frame" x="1" y="1" width="22" height="22" /><path d="M4 4H10M4 7H10M4 10H10M4 13H10" stroke="#080" stroke-width="1.6" /><path d="M13 4H21M13 7H21M13 10H21" stroke="#f00" stroke-width="1.6" /><circle cx="15" cy="17" r="5" fill="#ddd" stroke="#777" /><path d="M12 16L15 19L21 12" fill="none" stroke="#777" stroke-width="1.5" /></svg></button>
          <button type="button" aria-label="列表"><svg viewBox="0 0 24 24"><rect class="frame" x="1" y="1" width="22" height="22" /><g stroke-width="5" stroke-dasharray="2 1.5"><path d="M6 5V20" stroke="#f22" /><path d="M12 5V20" stroke="#080" /><path d="M18 5V20" stroke="#22f" /></g></svg></button>
          <button type="button" aria-label="分时图"><svg viewBox="0 0 24 24"><rect class="frame" x="1" y="1" width="22" height="22" /><path d="M2 17L8 12L12 15L22 7" fill="none" stroke="#f00" stroke-width="1.5" /></svg></button>
          <button type="button" aria-label="K线图"><svg viewBox="0 0 24 24"><rect class="frame" x="1" y="1" width="22" height="22" /><path d="M6 6V18M18 2V14" stroke="#f00" /><path d="M4 9H8V15H4ZM16 4H20V11H16Z" fill="#f00" /><path d="M12 5V20" stroke="#080" /><path d="M10 7H14V16H10Z" fill="#080" /></svg></button>
          <button type="button" aria-label="多窗口"><svg viewBox="0 0 24 24"><rect class="frame" x="5" y="1" width="18" height="16" /><rect class="frame" x="1" y="6" width="18" height="16" /><path d="M4 11H16M4 14H16M4 17H16" stroke="#555" stroke-width="1.4" stroke-dasharray="5 2" /></svg></button>
          <button type="button"><span class="boxed">F10</span></button>
          <button type="button" aria-label="板块"><svg viewBox="0 0 24 24"><rect class="frame" x="1" y="1" width="22" height="22" /><path d="M8 7V18H14M8 11H14" fill="none" stroke="#48f" stroke-width="1.5" /><path d="M5 4H11V7H5ZM14 9H20V13H14ZM14 16H20V20H14Z" fill="#ffd36b" stroke="#f0a000" stroke-width="1.5" /></svg></button>
          <button type="button"><span class="boxed orange">自</span></button>
          <button type="button"><span class="boxed">F12</span></button>
          <button type="button"><span class="boxed teal">f(x)</span></button>
          <button type="button" aria-label="圆"><svg viewBox="0 0 24 24"><rect class="frame" x="1" y="2" width="22" height="20" /><circle cx="12" cy="12" r="5.5" fill="none" stroke="#0a6ac8" stroke-width="1.6" /></svg></button>
        </div>
        <hr />
        <div class="group g5">
          <button type="button" aria-label="指标"><svg viewBox="0 0 24 24"><rect class="frame" x="1" y="2" width="22" height="20" /><path d="M3 10L6 8L8 10L12 7L14 10L18 7L21 8" fill="none" stroke="#f00" stroke-width="1.4" /><path d="M3 17L7 15L10 18L13 15L16 17L21 15" fill="none" stroke="#33f" stroke-width="1.6" /></svg></button>
          <button type="button"><span class="rsi">RSI</span></button>
          <button type="button" aria-label="涨价"><svg viewBox="0 0 24 24"><path d="M18 10V7Q12 4 8 8Q7 12 12 13Q18 14 16 18Q12 21 6 18V16" fill="none" stroke="#999" stroke-width="3" /><path d="M17 9V7Q11 4 7 8Q6 11 11 12Q17 13 15 17Q11 20 5 18V15" fill="none" stroke="#d83030" stroke-width="3" /><path d="M11 0L15 5H7Z" fill="#d83030" /></svg></button>
          <button type="button" aria-label="移动"><svg viewBox="0 0 24 24"><path d="M12 0L17 6H14V10H18V7L24 12L18 17V14H14V18H17L12 24L7 18H10V14H6V17L0 12L6 7V10H10V6H7Z" fill="#1560d0" /></svg></button>
          <button type="button" aria-label="画笔"><svg viewBox="0 0 24 24"><path d="M3 22L5 15L16 4L20 8L9 19Z" fill="#f0a830" stroke="#a86a20" /><path d="M16 4L18 2Q20 1 22 4Q22 6 20 8Z" fill="#e05050" /><path d="M3 22L4 18L7 21Z" fill="#432" /></svg></button>
        </div>
        <hr />
        <div class="group g14">
          <button type="button"><span class="boxed">F5</span></button>
          <button type="button" aria-label="刷新"><svg viewBox="0 0 24 24"><rect class="frame" x="1" y="3" width="22" height="17" /><path d="M4 11Q4 5 11 5Q16 5 18 8L20 6V13H13L15 10Q11 7 8 9L7 11Z" fill="#6cc850" /><path d="M20 13Q19 18 13 18Q8 18 6 16L4 18V12H10L8 14Q12 16 15 14L17 13Z" fill="#3fa02c" /></svg></button>
          <button v-for="p in railPeriods" :key="p" type="button" class="per" :class="{ on: p === '日' }">{{ p }}</button>
        </div>
      </nav>
    </main>

    <footer class="status">
      <svg class="sicon" viewBox="0 0 22 22"><rect x="1" y="1" width="19" height="19" rx="2" fill="#ffd060" stroke="#e09a10" stroke-width="2" /><rect x="5" y="5" width="11" height="11" fill="#f0a820" stroke="#fff" stroke-width="2" /></svg>
      <div v-for="i in indices" :key="i.n" class="index">
        <span>{{ i.n }}</span><b :class="i.c">{{ i.v }}</b><b class="r" :class="i.c">{{ i.d }}</b><b class="r" :class="i.c">{{ i.p }}</b><span class="r"><b>{{ i.a }}</b>亿</span>
      </div>
      <div class="total"><span>总成交</span><b>7535</b></div>
    </footer>

    <div class="banner">
      <span class="cn">公式指标网</span>
      <svg class="emblem" viewBox="0 0 80 80">
        <path d="M3 38A37 37 0 0 1 30 4L32 11A30 30 0 0 0 10 38ZM50 4A37 37 0 0 1 77 38H70A30 30 0 0 0 48 11Z" fill="#dc5a48" />
        <path d="M77 41A37 37 0 0 1 33 78L36 70A30 30 0 0 0 70 41Z" fill="#f0d040" />
        <path d="M32 2H48V9L44 12V15H56V38H25V15H36V12L32 9ZM25 41H56V52H53L57 68H45L44 60H37L36 68H24L28 52H25Z" fill="#f0d040" />
        <circle cx="40" cy="6" r="3" fill="#80acda" />
        <path d="M31 21H50M31 27H37V34H31M50 27H44V34H50M31 46H50M37 52L34 62M44 52L47 62" fill="none" stroke="#80acda" stroke-width="2" />
        <path id="arc" d="M2 44A38 38 0 0 0 32 77" fill="none" />
        <text class="ring"><textPath href="#arc">www.9m8.cn</textPath></text>
      </svg>
      <span class="url">www.9m8.cn</span>
    </div>
  </div>
</template>

<style>
body { margin: 0; background: #000; }
</style>

<style scoped>
.app { position: relative; display: flex; flex-direction: column; min-height: 100vh; background: #000; color: #c0c0c0; font: 18px/24px "Liberation Sans", "Noto Sans CJK SC", sans-serif; white-space: nowrap; overflow: hidden; }
button { margin: 0; padding: 0; border: 0; background: none; color: inherit; font: inherit; }
em, i { font-style: normal; }
svg { display: block; }

.menubar { display: flex; align-items: center; height: 34px; background: #f0f0f0; border-bottom: 2px solid #707070; color: #303030; }
.logo { width: 26px; height: 26px; margin: 0 5px 0 4px; }
.brand { width: 154px; }
.menu-left { display: flex; flex: 1; }
.menu-left button { width: 72px; text-align: center; }
.notice { display: flex; gap: 24px; flex: 0 0 434px; font-size: 19px; }
.notice a { color: #f00000; text-decoration: none; }
.menu-right { display: flex; }
.menu-right button { width: 57px; text-align: left; }
.clock { display: flex; gap: 9px; align-items: center; height: 32px; padding: 0 4px 0 3px; border: solid #a0a0a0; border-width: 0 1px; }
.winbtns { display: flex; width: 156px; }
.winbtns button { flex: 1; }
.winbtns svg { width: 19px; height: 19px; margin: 0 auto; fill: none; stroke: #222; stroke-width: 3; }

.body { display: flex; align-items: stretch; }
.charts { flex: 1; min-width: 0; }
.toolbar { display: flex; height: 31px; align-items: stretch; border-bottom: 1px solid #c00000; }
.pane-btn { width: 35px; border-right: 1px solid #a00000; }
.pane-btn svg { width: 20px; height: 20px; margin: 0 auto; }
.periods { display: flex; flex: 1; gap: 14px; padding-left: 6px; }
.active { color: #40ffff; }
.tools { display: flex; }
.tools button { width: 53px; border-left: 1px solid #a00000; }

.legend { display: flex; }
.legend-row { display: flex; flex: 1; align-items: center; }
.legend-row span { display: flex; align-items: center; }
.axis-cap { flex: 0 0 75px; border-left: 1px solid #c00000; }
.axis-cap.box { flex-basis: 72px; border: 2px solid #b00000; border-width: 2px 2px 0; margin-top: -1px; }
.main-legend { height: 26px; }
.main-legend .legend-row { gap: 7px; padding-left: 5px; }
.main-legend .second { margin: 0 19px 0 12px; }
.drop { width: 18px; height: 18px; }
.down { width: 8px; height: 20px; margin-left: 3px; fill: #40e8ff; }
.corner { width: 46px; height: 20px; margin: 0 6px 0 auto; }
.silver { color: #c0c0c0; } .red { color: #ff0000; } .blue { color: #0060f0; } .white { color: #fff; } .yellow { color: #ffff00; }
.lime { color: #60e000; } .violet { color: #a860e0; } .cyan { color: #00e8e8; }
.b1 { color: #33b4e8; } .b2 { color: #3090f0; } .b3 { color: #0000e8; } .b4 { color: #3300cc; }
.sub-legend { height: 38px; }
.sub-legend .legend-row { align-items: flex-start; padding: 1px 0 0 3px; }
.sub-legend .drop { margin-top: 3px; }
.sub-legend .title { width: 74px; padding-left: 6px; }
.num { width: 63px; }
.num.wide { width: 73px; }
.sub-legend .cutoff { position: relative; gap: 18px; margin-left: 28px; }
.cutoff::before { content: ""; position: absolute; inset: 0 0 auto -40px; height: 13px; background: #000; z-index: 1; }

.chart { width: 100%; height: auto; }
.chart.sub { overflow: visible; }
.chart text { font-size: 18px; }
.chart .note { font-size: 17px; }
.chart .badge { font-size: 16px; fill: #fff; }
.chart .axis { fill: #f03030; text-anchor: end; }
.chart .month { fill: #f03030; }
.dotted path { stroke: #a00000; stroke-width: 2; stroke-dasharray: 2 4; }
.faint { opacity: .45; }
.zone-grey { fill: #828282; }
.redline { fill: none; stroke: #b00000; }
.redline.bold { stroke-width: 3; }
.cursor { fill: #00007f; stroke: #c00000; }
polyline { fill: none; }
.ma-red { stroke: #ff0000; stroke-width: 6; }
.ma-blue { stroke: #0064ff; stroke-width: 5; }
.ma-red.thin { stroke-width: 4; }
.ln-purple { stroke: #a050d8; stroke-width: 2; }
.ln-green { stroke: #60d800; stroke-width: 2; }
.ln-cyan { stroke: #00d8d8; stroke-width: 2; }
.k-r { fill: #000; stroke: #f03030; stroke-width: 2; }
.k-c { fill: #54ffff; } .k-c path { stroke: #40e8e8; stroke-width: 2; }
.k-w { fill: #fff; } .k-w path { stroke: #fff; stroke-width: 2; }
.k-m rect { fill: #ff00ff; } .k-m path, .pink-wick { stroke: #ff7070; stroke-width: 2; }
.tick-mag { stroke: #ff00e0; stroke-width: 2; } .tick-red { stroke: #ff0020; stroke-width: 2; }
.f-silver { fill: #c0c0c0; } .f-white { fill: #fff; } .f-red { fill: #ff0000; } .f-green { fill: #00f000; }
.f-pink { fill: #ff60c8; } .f-steel { fill: #5a90e8; } .f-cyan { fill: #00e0e8; } .f-navy { fill: #0000ff; } .f-yellow { fill: #ffff00; } .f-zone { fill: #f80820; }
.hand { fill: #ffcb70; stroke: #503018; stroke-width: 1; }
.arrow { fill: none; stroke: #d0d0d0; stroke-width: 2; }
.band1 { fill: #33ccff; } .band2 { fill: #3399ff; } .band3 { fill: #0000ff; } .band4 { fill: #3300cc; }
.force { stroke: #ff0000; stroke-width: 6; stroke-linejoin: round; }

.tabs { display: flex; height: 24px; border-bottom: 1px solid #b00000; }
.tabs.second { height: 26px; border-bottom: 2px solid #b00000; }
.tabs button { padding: 0 5px; border-right: 1px solid #b00000; line-height: 24px; }
.tabs.second button { padding-right: 6px; line-height: 26px; }
.tabs .spacer { flex: 1; }
.tabs .lead { border-left: 1px solid #b00000; padding: 0 4px; }
.tabs .sq { width: 37px; }
.gold { color: #d0d000; }

.quote { flex: 0 0 334px; border-left: 1px solid #b00000; line-height: 27px; }
.head { height: 82px; border-bottom: 1px solid #b00000; }
h1 { margin: 0; padding: 2px 0 0 53px; font-size: 28px; line-height: 36px; font-weight: bold; color: #00e8f8; }
h1 small { font-size: 21px; color: #c0c0c0; font-weight: bold; }
.price { display: flex; justify-content: space-between; padding: 4px 4px 0 3px; font-size: 28px; line-height: 36px; font-weight: bold; color: #ff3232; }
.tri { font-family: "Noto Sans CJK SC", sans-serif; line-height: 28px; }
table { border-collapse: collapse; table-layout: fixed; width: 100%; }
td, dd, .flows b, .flows strong { font-size: 21px; font-weight: bold; }
td { padding: 0; text-align: right; height: 27px; line-height: 27px; }
em { font-size: 24px; font-weight: normal; line-height: 24px; }
.book { width: calc(100% - 4px); }
.book tr, .trades tr { height: 27px; }
.book th { width: 82px; padding: 0 0 0 2px; text-align: left; font-size: 24px; font-weight: normal; line-height: 27px; }
.book td:nth-child(2) { width: 79px; }
.book.asks { margin-top: 2px; }
.book.bids { margin-bottom: 2px; }
.ratio { height: 2px; background: #2f70b0; }
.ratio span { display: block; width: 54%; height: 2px; background: #b07810; }
.up-r { color: #ff3232; } .up-g { color: #00f000; } .up-m { color: #c800c8; } .vol { color: #c8c800; }
.stats { margin: 0; border-top: 1px solid #b00000; }
.stats.more { padding: 0 0 4px; }
.stats div { display: grid; grid-template-columns: 80px 81px 80px 1fr; padding: 0 3px 0 2px; height: 29px; line-height: 29px; }
.stats dt { font-size: 24px; }
.stats dt:nth-of-type(2) { padding-left: 8px; }
.stats dt.latin { font-size: 21px; font-weight: bold; }
.stats dd { margin: 0; text-align: right; }
.stats dd.dash { padding-right: 16px; }
.flows { border-top: 1px solid #b00000; padding: 1px 0 3px; color: #00f000; }
.flows > div { display: grid; grid-template-columns: 139px 36px 94px 61px; padding-left: 2px; height: 29px; line-height: 29px; }
.flows .name { color: #c0c0c0; font-size: 24px; font-weight: normal; }
.flows b { text-align: right; }
.flows .bar { align-self: center; }
.flows .bar i { display: block; height: 10px; background: #00e800; }
.trades { position: relative; border-top: 1px solid #b00000; }
.trades table { width: calc(100% - 4px); }
.trades .time { width: 56px; text-align: left; padding-left: 2px; }
.trades td:nth-child(2) { width: 100px; }
.trades td:nth-child(3) { width: 94px; }
.trades .side { width: 31px; }
.trades .cnt { color: #808080; }

.ime { position: absolute; top: 416px; right: 30px; display: flex; gap: 1px; padding: 2px; background: #404040; border: 2px solid #f0ecd8; }
.ime button { height: 17px; min-width: 18px; background: #c8c8c8; color: #111; font-size: 16px; line-height: 17px; box-shadow: inset 1px 1px #fff; }
.ime .name { padding: 0 5px; }
.ime .a { color: #b00000; font-weight: bold; }
.ime svg { width: 16px; height: 16px; margin: 0 auto; }

.rail { flex: 0 0 36px; border-left: 2px solid #b0b0b0; background: #f0f0f0; color: #1a3f9a; }
.group { display: flex; flex-direction: column; }
.group button { flex: 1; display: flex; align-items: center; justify-content: center; }
.g14 { height: 483px; }
.g5 { height: 174px; }
.rail hr { margin: 5px 2px; border: 0; border-top: 1px solid #a0a0a0; }
.rail hr:first-of-type { margin-top: 3px; }
.rail svg { width: 24px; height: 24px; }
.frame { fill: #fff; stroke: #3c78e0; stroke-width: 1.5; }
.hollow { fill: #fff; stroke: #3c78e0; stroke-width: 1.5; }
.boxed { box-sizing: border-box; width: 25px; height: 22px; border: 1px solid #3c78e0; background: #fff; color: #1a3fc8; font-size: 13px; line-height: 20px; font-weight: bold; text-align: center; }
.orange { color: #f07020; font-size: 16px; border-color: #2090f0; }
.teal { border-color: #208080; border-radius: 4px; font-style: italic; font-size: 12px; }
.rsi { font-size: 15px; font-weight: bold; }
.rail .per { font-size: 17px; }
.rail .on { background: #fafafa; box-shadow: inset 1px 1px #888; }

.status { display: flex; align-items: center; flex: 1; min-height: 33px; background: #f0f0f0; color: #000; font-size: 24px; line-height: 30px; }
.status b { font-size: 21px; }
.sicon { width: 22px; height: 22px; margin-right: 2px; }
.index { display: grid; grid-template-columns: 54px 78px 75px 88px 92px; width: 412px; align-items: baseline; }
.r { text-align: right; }
.s-red { color: #ff0000; } .s-green { color: #008800; }
.total { display: flex; gap: 10px; border-left: 1px solid #a0a0a0; padding-left: 3px; }

.banner { position: absolute; right: 0; bottom: 0; display: flex; align-items: center; box-sizing: border-box; width: 800px; height: 81px; padding-left: 18px; background: #80acda; color: #fff; }
.cn { width: 300px; color: #1a0080; font-size: 55px; line-height: 80px; font-weight: 900; }
.emblem { width: 80px; height: 80px; }
.ring { font-size: 9px; font-weight: bold; fill: #fff; }
.url { margin-left: 32px; font-family: "DejaVu Serif", serif; font-size: 51px; line-height: 80px; font-weight: bold; -webkit-text-stroke: 1px #fff; }
</style>
